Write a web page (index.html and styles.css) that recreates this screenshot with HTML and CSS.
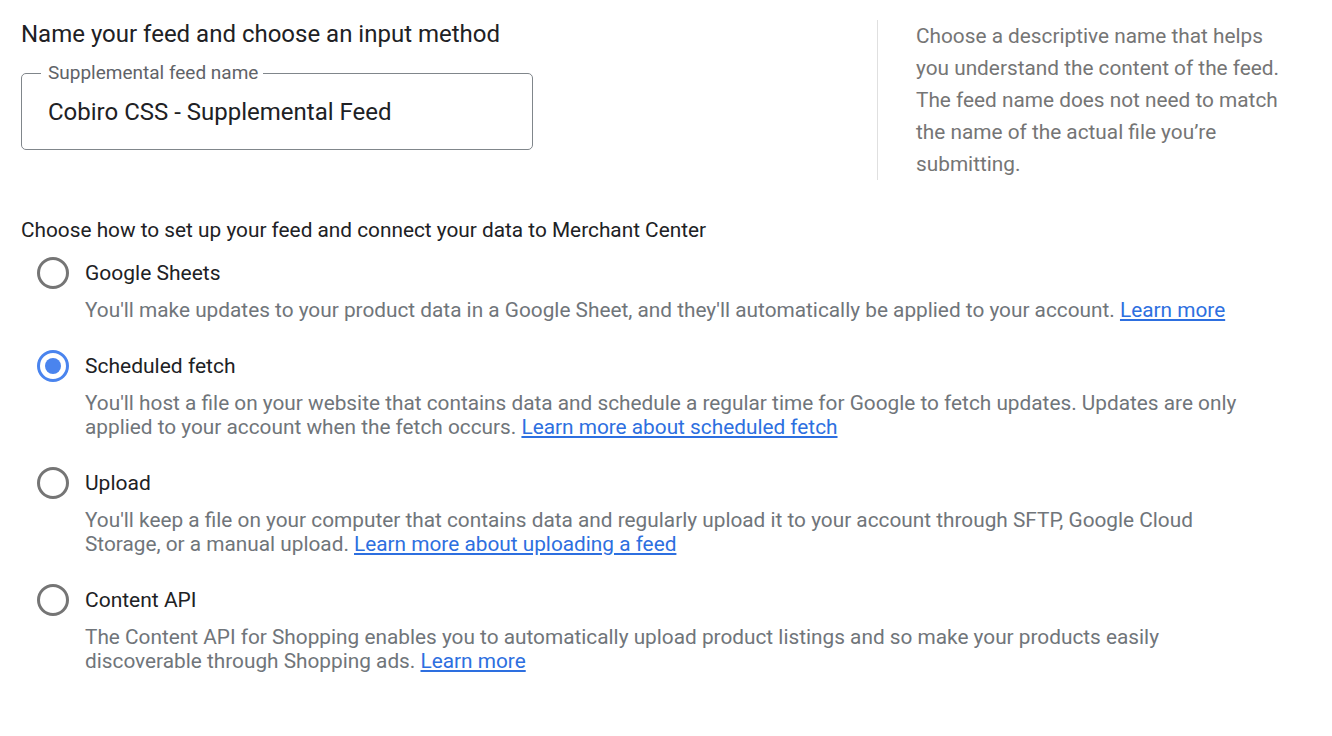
FILE: index.html
```html
<!DOCTYPE html>
<html lang="en">
<head>
<meta charset="utf-8">
<title>Name your feed</title>
<link rel="stylesheet" href="styles.css">
</head>
<body>
<div class="page">
  <div class="top-row">
    <div class="name-col">
      <h2 class="heading">Name your feed and choose an input method</h2>
      <fieldset class="field">
        <legend class="field-label">Supplemental feed name</legend>
        <div class="field-value">Cobiro CSS - Supplemental Feed</div>
      </fieldset>
    </div>
    <div class="help-col">
      <p class="help-text">Choose a descriptive name that helps you understand the content of the feed. The feed name does not need to match the name of the actual file you’re submitting.</p>
    </div>
  </div>

  <p class="subtitle">Choose how to set up your feed and connect your data to Merchant Center</p>

  <div class="options">
    <div class="option">
      <span class="radio"></span>
      <div class="option-body">
        <div class="option-label">Google Sheets</div>
        <div class="option-desc">You'll make updates to your product data in a Google Sheet, and they'll automatically be applied to your account. <a class="link" href="#">Learn more</a></div>
      </div>
    </div>
    <div class="option">
      <span class="radio checked"></span>
      <div class="option-body">
        <div class="option-label">Scheduled fetch</div>
        <div class="option-desc">You'll host a file on your website that contains data and schedule a regular time for Google to fetch updates. Updates are only applied to your account when the fetch occurs. <a class="link" href="#">Learn more about scheduled fetch</a></div>
      </div>
    </div>
    <div class="option">
      <span class="radio"></span>
      <div class="option-body">
        <div class="option-label">Upload</div>
        <div class="option-desc">You'll keep a file on your computer that contains data and regularly upload it to your account through SFTP, Google Cloud Storage, or a manual upload. <a class="link" href="#">Learn more about uploading a feed</a></div>
      </div>
    </div>
    <div class="option">
      <span class="radio"></span>
      <div class="option-body">
        <div class="option-label">Content API</div>
        <div class="option-desc">The Content API for Shopping enables you to automatically upload product listings and so make your products easily discoverable through Shopping ads. <a class="link" href="#">Learn more</a></div>
      </div>
    </div>
  </div>
</div>
</body>
</html>
```

FILE: styles.css
```css
* { box-sizing: border-box; }
html, body {
  margin: 0;
  padding: 0;
  background: #ffffff;
}
body {
  font-family: Roboto, "Liberation Sans", Arial, sans-serif;
  color: #202124;
}
.page {
  padding: 20px 21px 40px 21px;
}
.top-row {
  display: flex;
  align-items: flex-start;
}
.name-col {
  width: 856px;
}
.heading {
  margin: 0;
  font-size: 24px;
  line-height: 28px;
  font-weight: 400;
  color: #202124;
}
.field {
  margin: 14px 0 0 0;
  width: 512px;
  height: 88px;
  border: 1px solid #80868b;
  border-radius: 5px;
  padding: 13px 26px 0 26px;
}
.field-label {
  margin-left: -7px;
  padding: 0 5px 0 7px;
  font-size: 19px;
  line-height: 22px;
  color: #5f6368;
}
.field-value {
  font-size: 24px;
  line-height: 30px;
  color: #202124;
}
.help-col {
  border-left: 1px solid #e0e0e0;
  padding-left: 38px;
  width: 411px;
}
.help-text {
  margin: 0;
  font-size: 20.8px;
  line-height: 32px;
  color: #757575;
}
.subtitle {
  margin: 38px 0 0 0;
  font-size: 20.8px;
  line-height: 24px;
  color: #202124;
}
.options {
  padding-left: 16px;
  margin-top: 17px;
  display: flex;
  flex-direction: column;
  gap: 30px;
}
.option {
  display: flex;
  align-items: flex-start;
  gap: 16px;
}
.radio {
  flex: 0 0 auto;
  width: 32px;
  height: 32px;
  margin-top: -2px;
  border: 3px solid #757575;
  border-radius: 50%;
  display: flex;
  align-items: center;
  justify-content: center;
}
.radio.checked {
  border-color: #4a84ee;
}
.radio.checked::after {
  content: "";
  width: 16px;
  height: 16px;
  border-radius: 50%;
  background: #4a84ee;
}
.option-body {
  max-width: 1165px;
}
.option-label {
  font-size: 21px;
  line-height: 28px;
  color: #202124;
}
.option-desc {
  margin-top: 11px;
  font-size: 20.8px;
  line-height: 24px;
  color: #70757a;
}
.link {
  color: #2d6fe0;
  text-decoration: underline;
}
```
